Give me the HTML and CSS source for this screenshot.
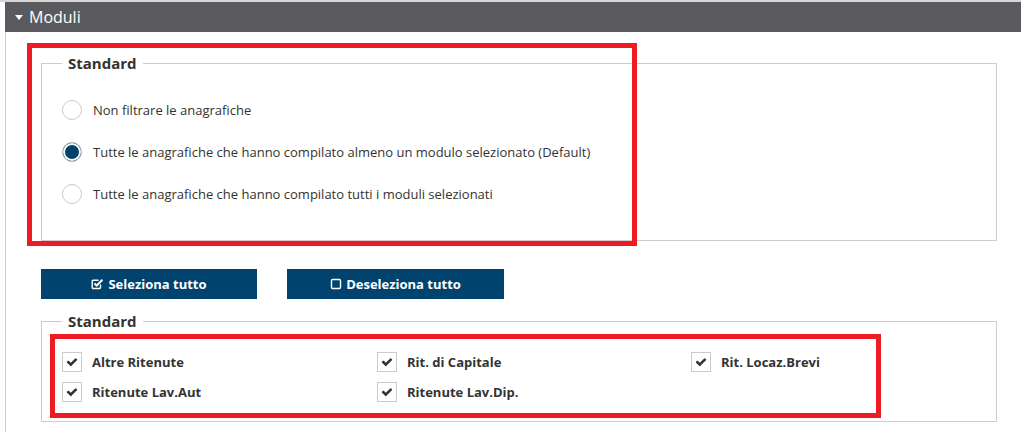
FILE: index.html
```html
<!DOCTYPE html>
<html lang="it">
<head>
<meta charset="utf-8">
<title>Moduli</title>
<link rel="stylesheet" href="styles.css">
</head>
<body>
<div class="topline"></div>
<div class="panel">
  <div class="panel-header">
    <span class="caret"></span>
    <span class="panel-title">Moduli</span>
  </div>
  <div class="panel-body">
    <fieldset class="group group-radios">
      <legend>Standard</legend>
      <label class="radio-row">
        <span class="radio"></span>
        <span>Non filtrare le anagrafiche</span>
      </label>
      <label class="radio-row">
        <span class="radio checked"></span>
        <span>Tutte le anagrafiche che hanno compilato almeno un modulo selezionato (Default)</span>
      </label>
      <label class="radio-row">
        <span class="radio"></span>
        <span>Tutte le anagrafiche che hanno compilato tutti i moduli selezionati</span>
      </label>
    </fieldset>

    <div class="buttons">
      <button class="btn" type="button">
        <svg class="btn-icon" viewBox="0 0 13 12" width="13" height="12" aria-hidden="true">
          <path d="M9.5 6.5 V9.5 a1 1 0 0 1 -1 1 H2.2 a1 1 0 0 1 -1 -1 V3.2 a1 1 0 0 1 1 -1 H7.5" fill="none" stroke="#fff" stroke-width="1.4"/>
          <path d="M3.4 5.4 L5.6 7.6 L11.4 1.8" fill="none" stroke="#fff" stroke-width="2"/>
        </svg>
        Seleziona tutto
      </button>
      <button class="btn" type="button">
        <svg class="btn-icon" viewBox="0 0 12 12" width="12" height="12" aria-hidden="true">
          <rect x="1.5" y="1.5" width="9" height="9" rx="1.2" fill="none" stroke="#fff" stroke-width="1.4"/>
        </svg>
        Deseleziona tutto
      </button>
    </div>

    <fieldset class="group group-checks">
      <legend>Standard</legend>
      <div class="checks">
        <label class="check-row"><span class="check"><svg viewBox="0 0 1792 1792" width="12" height="12" aria-hidden="true"><path d="M1671 566q0 40-28 68l-724 724-136 136q-28 28-68 28t-68-28l-136-136-362-362q-28-28-28-68t28-68l136-136q28-28 68-28t68 28l294 295 656-657q28-28 68-28t68 28l136 136q28 28 28 68z" fill="#333"/></svg></span><span>Altre Ritenute</span></label>
        <label class="check-row"><span class="check"><svg viewBox="0 0 1792 1792" width="12" height="12" aria-hidden="true"><path d="M1671 566q0 40-28 68l-724 724-136 136q-28 28-68 28t-68-28l-136-136-362-362q-28-28-28-68t28-68l136-136q28-28 68-28t68 28l294 295 656-657q28-28 68-28t68 28l136 136q28 28 28 68z" fill="#333"/></svg></span><span>Rit. di Capitale</span></label>
        <label class="check-row"><span class="check"><svg viewBox="0 0 1792 1792" width="12" height="12" aria-hidden="true"><path d="M1671 566q0 40-28 68l-724 724-136 136q-28 28-68 28t-68-28l-136-136-362-362q-28-28-28-68t28-68l136-136q28-28 68-28t68 28l294 295 656-657q28-28 68-28t68 28l136 136q28 28 28 68z" fill="#333"/></svg></span><span>Rit. Locaz.Brevi</span></label>
        <label class="check-row"><span class="check"><svg viewBox="0 0 1792 1792" width="12" height="12" aria-hidden="true"><path d="M1671 566q0 40-28 68l-724 724-136 136q-28 28-68 28t-68-28l-136-136-362-362q-28-28-28-68t28-68l136-136q28-28 68-28t68 28l294 295 656-657q28-28 68-28t68 28l136 136q28 28 28 68z" fill="#333"/></svg></span><span>Ritenute Lav.Aut</span></label>
        <label class="check-row"><span class="check"><svg viewBox="0 0 1792 1792" width="12" height="12" aria-hidden="true"><path d="M1671 566q0 40-28 68l-724 724-136 136q-28 28-68 28t-68-28l-136-136-362-362q-28-28-28-68t28-68l136-136q28-28 68-28t68 28l294 295 656-657q28-28 68-28t68 28l136 136q28 28 28 68z" fill="#333"/></svg></span><span>Ritenute Lav.Dip.</span></label>
      </div>
    </fieldset>

    <div class="mark mark-radios"></div>
    <div class="mark mark-checks"></div>
  </div>
</div>
</body>
</html>
```

FILE: styles.css
```css
* { box-sizing: border-box; }

html, body {
  margin: 0;
  padding: 0;
  background: #fff;
  font-family: "Open Sans", "Noto Sans", sans-serif;
  color: #333;
}

.topline {
  height: 2px;
  background: #d6d6d6;
}

.panel {
  margin-left: 5px;
  border-left: 1px solid #ccc;
  height: 430px;
}

.panel-header {
  height: 30px;
  margin-left: -1px;
  background: #5a595e;
  color: #fff;
  display: flex;
  align-items: center;
  padding-left: 10px;
  gap: 6px;
}

.caret {
  width: 0;
  height: 0;
  border-left: 4.5px solid transparent;
  border-right: 4.5px solid transparent;
  border-top: 5px solid #fff;
}

.panel-title {
  font-size: 16px;
  line-height: 20px;
}

.panel-body {
  position: relative;
  padding: 21px 24px 0 35px;
}

.group {
  margin: 0;
  border: 1px solid #ccc;
  padding: 0 0 0 20px;
  min-width: 0;
}

.group legend {
  margin-left: 0;
  padding: 0 6px;
  font-size: 15px;
  font-weight: 700;
  line-height: 20px;
  color: #333;
}

.group-radios {
  padding-top: 16px;
  padding-bottom: 25px;
}

.radio-row {
  display: flex;
  align-items: center;
  height: 42px;
  gap: 11px;
  font-size: 13px;
  color: #333;
}

.radio {
  width: 20px;
  height: 20px;
  border-radius: 50%;
  border: 1px solid #ccc;
  background: #fff;
  flex: none;
}

.radio.checked {
  background: #00416e;
  box-shadow: inset 0 0 0 2px #fff;
  border-color: #bbb;
}

.buttons {
  display: flex;
  gap: 30px;
  margin-top: 28px;
}

.btn {
  height: 30px;
  width: 216px;
  border: 0;
  background: #00436f;
  color: #fff;
  font-family: "Open Sans", "Noto Sans", sans-serif;
  font-size: 13px;
  font-weight: 700;
  display: flex;
  align-items: center;
  justify-content: center;
  gap: 4px;
  padding: 0;
}

.btn + .btn { width: 217px; }

.btn-icon { flex: none; }

.group-checks {
  margin-top: 12px;
  padding-top: 16px;
  padding-bottom: 14px;
}

.checks {
  display: grid;
  grid-template-columns: 315px 314px 1fr;
  grid-auto-rows: 30px;
}

.check-row {
  display: flex;
  align-items: center;
  gap: 10px;
  font-size: 13px;
  font-weight: 700;
  color: #333;
}

.check {
  width: 20px;
  height: 20px;
  border: 1px solid #ccc;
  display: flex;
  align-items: center;
  justify-content: center;
  flex: none;
}

.mark {
  position: absolute;
  border: 5px solid #ed1c24;
  pointer-events: none;
}

.mark-radios {
  left: 21px;
  top: 11px;
  width: 610px;
  height: 203px;
}

.mark-checks {
  left: 44px;
  top: 302px;
  width: 831px;
  height: 84px;
}
```
